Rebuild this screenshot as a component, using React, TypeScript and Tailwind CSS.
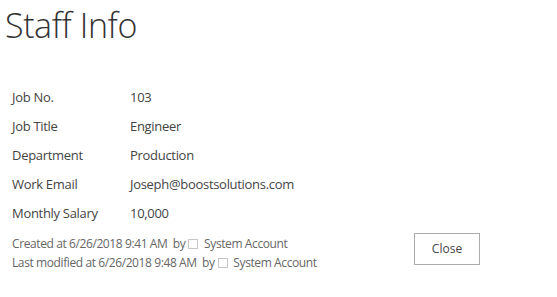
const rows: [string, string][] = [
  ["Job No.", "103"],
  ["Job Title", "Engineer"],
  ["Department", "Production"],
  ["Work Email", "Joseph@boostsolutions.com"],
  ["Monthly Salary", "10,000"],
];

function Box() {
  return <span className="inline-block w-[10px] h-[10px] border border-[#c6c6c6] mx-[3px] align-[-1px]" />;
}

export default function App() {
  return (
    <div className="w-[557px] h-[297px] bg-white text-[#444] font-['Open_Sans',sans-serif]">
      <h1 className="pl-[5px] pt-[2px] text-[34px] leading-[46px] font-light text-[#333] tracking-[-0.4px]">
        Staff Info
      </h1>
      <div className="mt-[35px] pl-[12px] flex flex-col">
        {rows.map(([label, value]) => (
          <div key={label} className="flex h-[29px] items-center text-[13px] tracking-[-0.3px]">
            <div className="w-[118px]">{label}</div>
            <div>{value}</div>
          </div>
        ))}
      </div>
      <div className="flex items-start pl-[12px] mt-[6px]">
        <div className="w-[402px] text-[12px] leading-[19px] text-[#666] tracking-[-0.4px]">
          <div>
            Created at 6/26/2018 9:41 AM&nbsp; by
            <Box /> System Account
          </div>
          <div>
            Last modified at 6/26/2018 9:48 AM&nbsp; by
            <Box /> System Account
          </div>
        </div>
        <button className="w-[66px] h-[32px] border border-[#ababab] bg-white text-[12px] text-[#444] mt-[-1px]">
          Close
        </button>
      </div>
    </div>
  );
}
